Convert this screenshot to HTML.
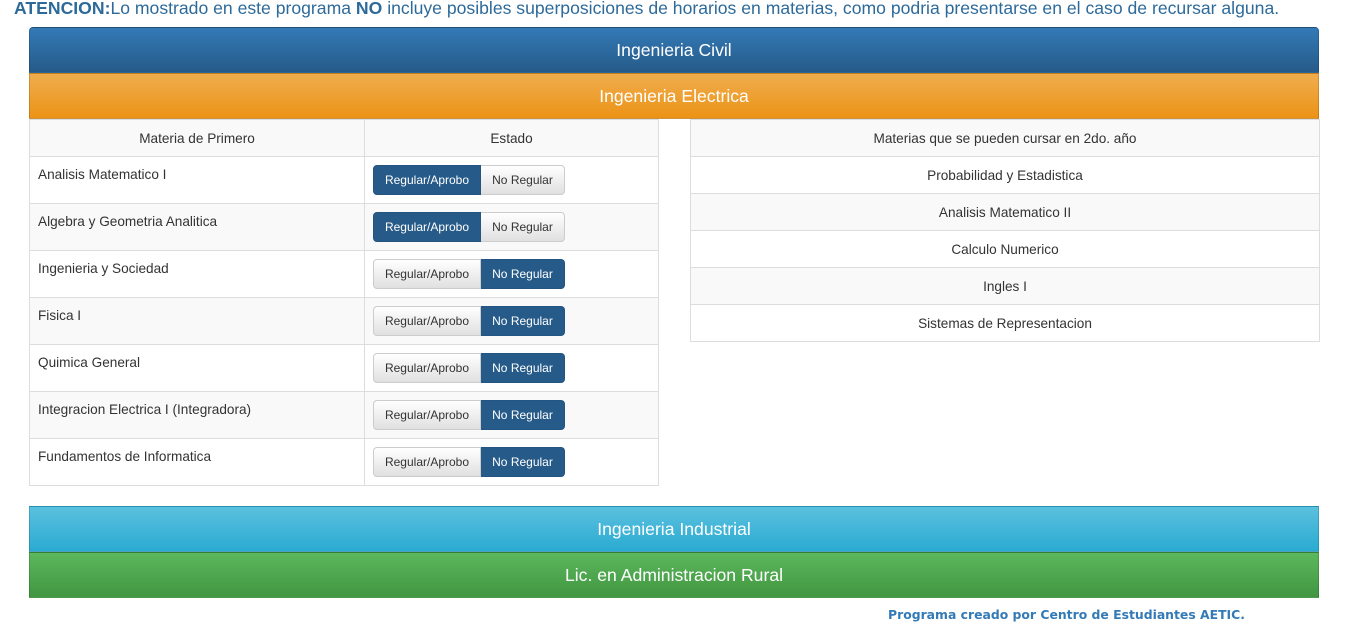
<!DOCTYPE html><html><head><style>
body{margin:0;background:#fff;font-family:"Liberation Sans",sans-serif;color:#333;font-size:13.6px;width:1348px;height:625px;overflow:hidden;position:relative}
.att{position:absolute;left:14px;top:-3px;font-size:17.6px;color:#2d6a9a;white-space:nowrap;line-height:22px}
.bar{position:absolute;left:29px;width:1290px;height:45px;line-height:45px;text-align:center;color:#fff;font-size:17.6px;border:1px solid rgba(0,0,0,.15);box-sizing:border-box}
table{position:absolute;border-collapse:collapse;background:#fff}
td{border:1px solid #ddd;box-sizing:border-box;padding:0 8px}
.l td{height:47px;vertical-align:top;padding-top:10px}
.l tr:nth-child(odd) td{background:#f9f9f9}
.l tr.h td{height:37px;text-align:center;vertical-align:middle;padding-top:0}
.r td{height:37px;text-align:center}
.r tr:nth-child(odd) td{background:#f9f9f9}
.g{display:inline-flex;margin-top:-2px}
.b{height:30px;line-height:28px;font-size:12px;box-sizing:border-box;border:1px solid #ccc;background:linear-gradient(#fff,#e0e0e0);color:#333;text-align:center}
.b1{width:108px;border-radius:4px 0 0 4px}.b2{width:84px;border-radius:0 4px 4px 0;border-left:0}
.on{background:#265a88;border-color:#245580;color:#fff}
.foot{position:absolute;left:888px;top:606px;font-family:"DejaVu Sans",sans-serif;font-weight:bold;font-size:12.4px;color:#337ab7;white-space:nowrap;line-height:18px}
</style></head><body>
<div class="att"><b>ATENCION:</b>Lo mostrado en este programa <b>NO</b> incluye posibles superposiciones de horarios en materias, como podria presentarse en el caso de recursar alguna.</div>
<div class="bar" style="top:27px;height:46px;background:linear-gradient(#337ab7,#265a88);border-radius:4px 4px 0 0">Ingenieria Civil</div>
<div class="bar" style="top:73px;height:46px;background:linear-gradient(#f0ad4e,#eb9316)">Ingenieria Electrica</div>
<table class="l" style="left:29px;top:119px;width:630px">
<tr class="h"><td style="width:335px">Materia de Primero</td><td>Estado</td></tr>
<tr><td>Analisis Matematico I</td><td><div class="g"><div class="b b1 on">Regular/Aprobo</div><div class="b b2">No Regular</div></div></td></tr>
<tr><td>Algebra y Geometria Analitica</td><td><div class="g"><div class="b b1 on">Regular/Aprobo</div><div class="b b2">No Regular</div></div></td></tr>
<tr><td>Ingenieria y Sociedad</td><td><div class="g"><div class="b b1">Regular/Aprobo</div><div class="b b2 on">No Regular</div></div></td></tr>
<tr><td>Fisica I</td><td><div class="g"><div class="b b1">Regular/Aprobo</div><div class="b b2 on">No Regular</div></div></td></tr>
<tr><td>Quimica General</td><td><div class="g"><div class="b b1">Regular/Aprobo</div><div class="b b2 on">No Regular</div></div></td></tr>
<tr><td>Integracion Electrica I (Integradora)</td><td><div class="g"><div class="b b1">Regular/Aprobo</div><div class="b b2 on">No Regular</div></div></td></tr>
<tr><td>Fundamentos de Informatica</td><td><div class="g"><div class="b b1">Regular/Aprobo</div><div class="b b2 on">No Regular</div></div></td></tr>
</table>
<table class="r" style="left:690px;top:119px;width:630px">
<tr><td>Materias que se pueden cursar en 2do. año</td></tr>
<tr><td>Probabilidad y Estadistica</td></tr>
<tr><td>Analisis Matematico II</td></tr>
<tr><td>Calculo Numerico</td></tr>
<tr><td>Ingles I</td></tr>
<tr><td>Sistemas de Representacion</td></tr>
</table>
<div class="bar" style="top:506px;height:46px;background:linear-gradient(#5bc0de,#2aabd2)">Ingenieria Industrial</div>
<div class="bar" style="top:552px;height:46px;background:linear-gradient(#5cb85c,#419641)">Lic. en Administracion Rural</div>
<div class="foot">Programa creado por Centro de Estudiantes AETIC.</div>
</body></html>
